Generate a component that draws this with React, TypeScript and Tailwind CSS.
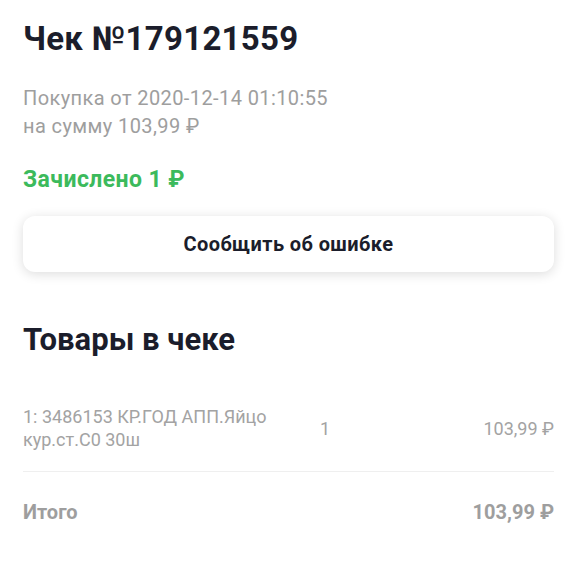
import React from "react";

export default function App() {
  return (
    <div
      className="w-[577px] h-[577px] bg-white px-[23px] pt-[19px] overflow-hidden"
      style={{ fontFamily: "Roboto, 'Noto Sans', sans-serif" }}
    >
      <h1 className="text-[33px] leading-[40px] font-bold tracking-[0.3px] text-[#1b1d2b]">Чек №179121559</h1>
      <div className="mt-[25px] text-[20px] leading-[28px] tracking-[0.4px] text-[#9e9e9e]">
        <div>Покупка от 2020-12-14 01:10:55</div>
        <div>на сумму 103,99 ₽</div>
      </div>
      <div className="mt-[27px] text-[23px] leading-[26px] font-bold tracking-[0.4px] text-[#3cba5c]">Зачислено 1 ₽</div>
      <button className="mt-[23px] w-full h-[56px] rounded-[12px] bg-white shadow-[0_2px_12px_rgba(0,0,0,0.14)] flex items-center justify-center text-[20px] font-bold tracking-[0.4px] text-[#1b1d2b]">
        Сообщить об ошибке
      </button>
      <h2 className="mt-[50px] text-[31px] leading-[36px] font-bold text-[#1b1d2b]">Товары в чеке</h2>
      <div className="mt-[47px] flex items-center text-[18px] leading-[23px] text-[#a3a3a3]">
        <div className="w-[297px]">
          <div>1: 3486153 КР.ГОД АПП.Яйцо</div>
          <div>кур.ст.С0 30ш</div>
        </div>
        <div className="flex-1">1</div>
        <div className="text-right">103,99 ₽</div>
      </div>
      <div className="mt-[20px] h-px bg-[#efefef]" />
      <div className="mt-[27px] flex justify-between text-[20px] leading-[26px] font-bold text-[#9e9e9e]">
        <div>Итого</div>
        <div>103,99 ₽</div>
      </div>
    </div>
  );
}
